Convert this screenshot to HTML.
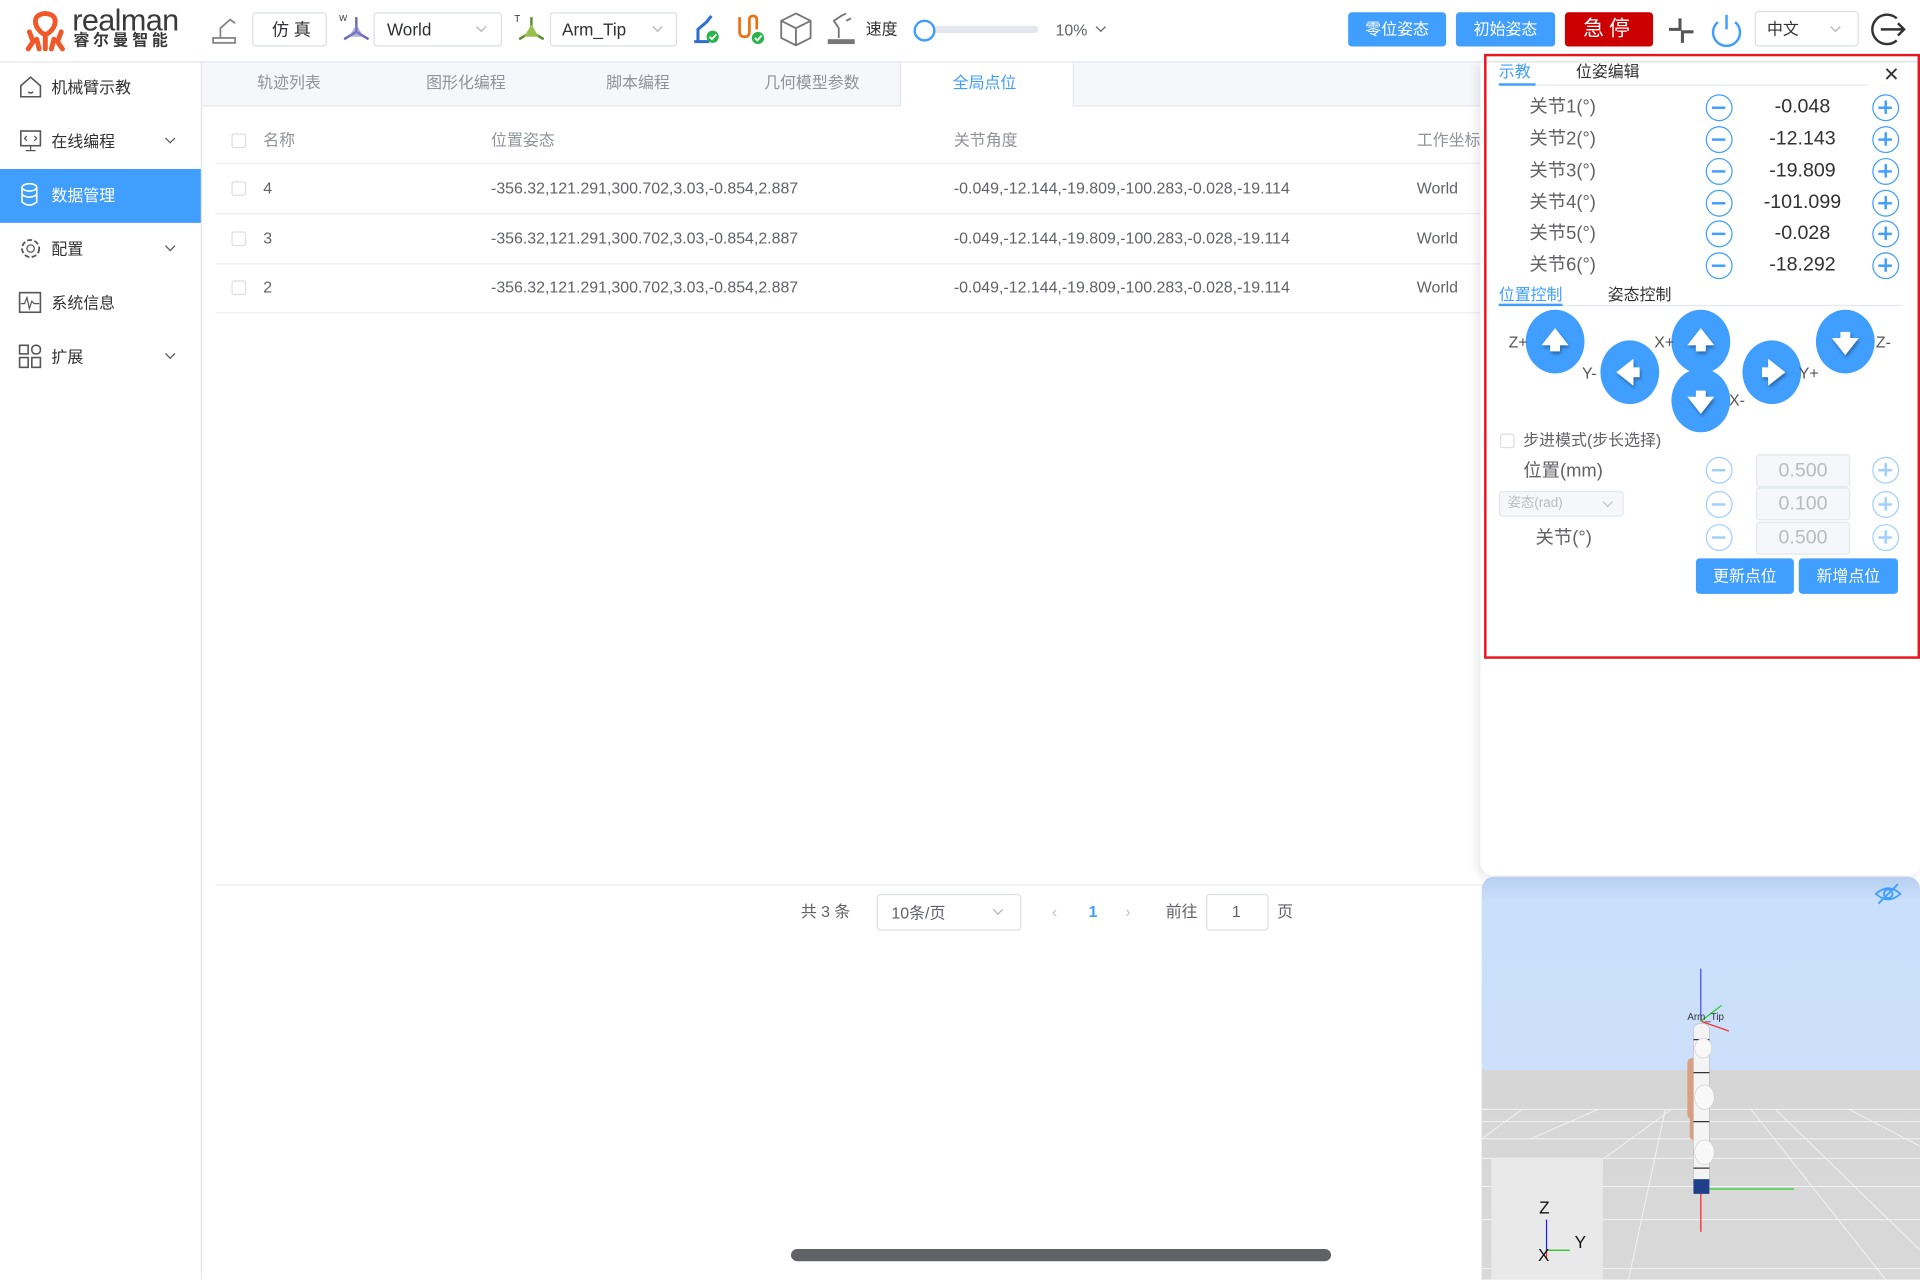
<!DOCTYPE html>
<html><head><meta charset="utf-8"><style>
*{box-sizing:border-box;margin:0;padding:0}
html,body{width:1920px;height:1280px;overflow:hidden;background:#fff}
#w{position:absolute;left:0;top:0;width:1568px;height:1045px;transform:scale(1.22449);transform-origin:0 0;font-family:"Liberation Sans","Noto Sans CJK SC",sans-serif;color:#606266;font-size:13px}
.a{position:absolute}
.t{position:absolute;white-space:nowrap;line-height:1}
.sel{position:absolute;border:1px solid #dcdfe6;border-radius:3px;background:#fff}
.chev{position:absolute;width:6px;height:6px;border-right:1px solid #b0b3b8;border-bottom:1px solid #b0b3b8;transform:rotate(45deg)}
.btn{position:absolute;background:#409eff;color:#fff;border-radius:3px;text-align:center;font-size:13px}
.side .t{font-size:13px;color:#303133}
.row{position:absolute;left:176px;width:1034px;height:1px;background:#ebeef5}
.cb{position:absolute;width:12px;height:12px;border:1px solid #dcdfe6;border-radius:2px;background:#fff}
.circ{position:absolute;width:22px;height:22px;border:1.5px solid #409eff;border-radius:50%}
.circ:before{content:"";position:absolute;left:4px;top:9px;width:11px;height:1.5px;background:#409eff}
.circ.p:after{content:"";position:absolute;left:9px;top:4px;width:1.5px;height:11px;background:#409eff}
.circ.d{border-color:#a0cfff}.circ.d:before,.circ.d:after{background:#a0cfff}
.jl{font-size:15px;color:#606266}
.jv{font-size:16px;color:#303133;text-align:center;width:80px}
.inp{position:absolute;width:77px;height:27px;background:#f5f7fa;border:1px solid #e4e7ed;border-radius:3px;color:#b8bbc0;font-size:16px;text-align:center;line-height:25px}
</style></head><body><div id="w">
<div class="a" style="left:0;top:50px;width:1568px;height:1px;background:#e4e7ed"></div>
<svg class="a" style="left:20px;top:8px" width="34" height="34" viewBox="0 0 34 34"><g fill="none" stroke="#f0582a" stroke-width="4" stroke-linecap="round"><path d="M10 14 Q6 4 17 3 Q28 4 24 14 Q20 20 17 20 Q14 20 10 14Z"/><path d="M4 18 L7 26 L3 32"/><path d="M30 18 L27 26 L31 32"/><path d="M17 22 L17 32"/><path d="M10 24 L12 32"/><path d="M24 24 L22 32"/></g></svg>
<div class="t" style="left:59px;top:5px;font-size:25px;color:#3a3a3a;letter-spacing:-0.5px">realman</div>
<div class="t" style="left:60px;top:26px;font-size:13px;font-weight:bold;color:#3a3a3a;letter-spacing:3px">睿尔曼智能</div>
<svg class="a" style="left:172px;top:11px" width="24" height="26"><g fill="none" stroke="#888" stroke-width="1.5"><rect x="2" y="20" width="18" height="4"/><path d="M8 20 V12 L16 5 L20 8"/></g></svg>
<div class="sel" style="left:206px;top:10px;width:61px;height:28px"></div><div class="t" style="left:222px;top:17px;font-size:14px;color:#303133">仿 真</div>
<svg class="a" style="left:277px;top:10px" width="28" height="26"><text x="0" y="7" font-size="7" fill="#333">W</text><path d="M14 4 V16 L4 22 M14 16 L24 22" stroke="#6a6ab0" stroke-width="2" fill="none"/><path d="M14 10 L8 20 L20 20Z" fill="#8080c8" opacity=".6"/></svg>
<div class="sel" style="left:305px;top:10px;width:105px;height:28px"></div><div class="t" style="left:316px;top:17px;font-size:14px;color:#303133">World</div><div class="chev" style="left:390px;top:19px"></div>
<svg class="a" style="left:420px;top:10px" width="28" height="26"><text x="0" y="8" font-size="8" fill="#333">T</text><path d="M14 4 V16 L4 22 M14 16 L24 22" stroke="#5a8a30" stroke-width="2" fill="none"/><path d="M14 10 L8 20 L20 20Z" fill="#9ac050"/></svg>
<div class="sel" style="left:449px;top:10px;width:104px;height:28px"></div><div class="t" style="left:459px;top:17px;font-size:14px;color:#303133">Arm_Tip</div><div class="chev" style="left:534px;top:19px"></div>
<svg class="a" style="left:563px;top:10px" width="26" height="28"><path d="M4 24 H16 M7 24 V14 L14 8 L18 3" stroke="#2f6fd0" stroke-width="2.5" fill="none"/><circle cx="19" cy="20" r="5" fill="#29b34b"/><path d="M16.5 20 L18.5 22 L22 18" stroke="#fff" stroke-width="1.5" fill="none"/></svg>
<svg class="a" style="left:600px;top:10px" width="26" height="28"><path d="M4 4 V16 Q4 20 8 20 Q12 20 12 16 V6 Q12 3 15 3 Q18 3 18 6 V14" stroke="#f07010" stroke-width="2.2" fill="none"/><circle cx="19" cy="21" r="5" fill="#29b34b"/><path d="M16.5 21 L18.5 23 L22 19" stroke="#fff" stroke-width="1.5" fill="none"/></svg>
<svg class="a" style="left:636px;top:9px" width="28" height="30"><g fill="none" stroke="#777" stroke-width="1.5"><path d="M14 2 L26 8 V22 L14 28 L2 22 V8Z M2 8 L14 14 L26 8 M14 14 V28"/></g></svg>
<svg class="a" style="left:673px;top:9px" width="28" height="30"><g stroke="#777" stroke-width="1.5" fill="none"><path d="M12 22 V14 L8 8 L14 4 M14 4 L18 2 M18 8 L22 6"/></g><rect x="3" y="23" width="22" height="4" fill="#777"/></svg>
<div class="t" style="left:707px;top:17px;font-size:13px;color:#303133">速度</div>
<div class="a" style="left:755px;top:21px;width:93px;height:6px;background:#e4e7ed;border-radius:3px"></div>
<div class="a" style="left:746px;top:16px;width:18px;height:18px;border:2px solid #409eff;border-radius:50%;background:#fff"></div>
<div class="t" style="left:862px;top:18px;font-size:13px;color:#606266">10%</div><div class="chev" style="left:896px;top:19px;border-color:#606266"></div>
<div class="btn" style="left:1101px;top:10px;width:80px;height:28px;line-height:28px">零位姿态</div>
<div class="btn" style="left:1189px;top:10px;width:81px;height:28px;line-height:28px">初始姿态</div>
<div class="btn" style="left:1278px;top:10px;width:72px;height:28px;line-height:28px;background:#cc0000;font-size:17px;letter-spacing:4px">急停</div>
<svg class="a" style="left:1360px;top:12px" width="26" height="26"><path d="M3 12 H12 V3 M14 23 V14 H23" stroke="#555" stroke-width="2.5" fill="none"/></svg>
<svg class="a" style="left:1395px;top:9px" width="30" height="32"><path d="M8 9 A11 11 0 1 0 22 9" stroke="#409eff" stroke-width="2" fill="none"/><path d="M15 3 V15" stroke="#409eff" stroke-width="2"/></svg>
<div class="sel" style="left:1433px;top:9px;width:85px;height:29px"></div><div class="t" style="left:1443px;top:17px;font-size:13px;color:#303133">中文</div><div class="chev" style="left:1496px;top:19px"></div>
<svg class="a" style="left:1527px;top:8px" width="32" height="32"><path d="M22 7 A12 12 0 1 0 22 25" stroke="#333" stroke-width="2" fill="none"/><path d="M9 16 H28 M23 11 L28 16 L23 21" stroke="#333" stroke-width="2" fill="none"/></svg>
<div class="a" style="left:164px;top:51px;width:1px;height:994px;background:#e6e6e6"></div>
<div class="side">
<svg class="a" style="left:15px;top:61px" width="20" height="20"><path d="M2 9 L10 2 L18 9 V18 H2Z M8 14 Q10 16 12 14" stroke="#555" stroke-width="1.3" fill="none"/></svg><div class="t" style="left:42px;top:65px">机械臂示教</div>
<svg class="a" style="left:15px;top:105px" width="20" height="20"><rect x="2" y="2" width="16" height="12" stroke="#555" fill="none" stroke-width="1.3"/><path d="M10 14 V18 M6 18 H14 M7 6 L5 8 L7 10 M13 6 L15 8 L13 10" stroke="#555" fill="none"/></svg><div class="t" style="left:42px;top:109px">在线编程</div><div class="chev" style="left:136px;top:110px;border-color:#555"></div>
<div class="a" style="left:0;top:138px;width:164px;height:44px;background:#409eff"></div>
<svg class="a" style="left:15px;top:149px" width="20" height="22"><g stroke="#fff" stroke-width="1.3" fill="none"><ellipse cx="9" cy="4" rx="6" ry="3"/><path d="M3 4 V16 Q9 21 15 16 V4 M3 10 Q9 14 15 10"/></g></svg><div class="t" style="left:42px;top:153px;color:#fff">数据管理</div>
<svg class="a" style="left:15px;top:193px" width="20" height="20"><circle cx="10" cy="10" r="7" stroke="#555" stroke-width="1.5" fill="none" stroke-dasharray="4 2"/><circle cx="10" cy="10" r="3" stroke="#555" fill="none"/></svg><div class="t" style="left:42px;top:197px">配置</div><div class="chev" style="left:136px;top:198px;border-color:#555"></div>
<svg class="a" style="left:15px;top:237px" width="20" height="20"><rect x="1" y="2" width="17" height="16" stroke="#555" fill="none" stroke-width="1.3"/><path d="M2 11 H5 L7 6 L9 15 L11 9 L13 11 H17" stroke="#555" fill="none"/></svg><div class="t" style="left:42px;top:241px">系统信息</div>
<svg class="a" style="left:15px;top:281px" width="20" height="20"><g stroke="#555" fill="none" stroke-width="1.3"><rect x="1" y="1" width="7" height="7"/><rect x="1" y="11" width="7" height="8"/><rect x="11" y="11" width="7" height="8"/><rect x="11" y="1" width="7" height="7" rx="3"/></g></svg><div class="t" style="left:42px;top:285px">扩展</div><div class="chev" style="left:136px;top:286px;border-color:#555"></div>
</div>
<div class="a" style="left:165px;top:51px;width:1045px;height:36px;background:#f5f7fa;border-bottom:1px solid #e4e7ed"></div>
<div class="a" style="left:735px;top:51px;width:142px;height:36px;background:#fff;border-left:1px solid #e4e7ed;border-right:1px solid #e4e7ed"></div>
<div class="t" style="left:210px;top:61px;color:#909399">轨迹列表</div>
<div class="t" style="left:348px;top:61px;color:#909399">图形化编程</div>
<div class="t" style="left:495px;top:61px;color:#909399">脚本编程</div>
<div class="t" style="left:624px;top:61px;color:#909399">几何模型参数</div>
<div class="t" style="left:778px;top:61px;color:#409eff">全局点位</div>
<div class="cb" style="left:189px;top:109px"></div><div class="t" style="left:215px;top:108px;color:#909399">名称</div>
<div class="t" style="left:401px;top:108px;color:#909399">位置姿态</div><div class="t" style="left:779px;top:108px;color:#909399">关节角度</div><div class="t" style="left:1157px;top:108px;color:#909399">工作坐标</div>
<div class="row" style="top:133px"></div>
<div class="cb" style="left:189px;top:148px"></div><div class="t" style="left:215px;top:147px">4</div><div class="t" style="left:401px;top:147px">-356.32,121.291,300.702,3.03,-0.854,2.887</div><div class="t" style="left:779px;top:147px">-0.049,-12.144,-19.809,-100.283,-0.028,-19.114</div><div class="t" style="left:1157px;top:147px">World</div>
<div class="row" style="top:174px"></div>
<div class="cb" style="left:189px;top:189px"></div><div class="t" style="left:215px;top:188px">3</div><div class="t" style="left:401px;top:188px">-356.32,121.291,300.702,3.03,-0.854,2.887</div><div class="t" style="left:779px;top:188px">-0.049,-12.144,-19.809,-100.283,-0.028,-19.114</div><div class="t" style="left:1157px;top:188px">World</div>
<div class="row" style="top:215px"></div>
<div class="cb" style="left:189px;top:229px"></div><div class="t" style="left:215px;top:228px">2</div><div class="t" style="left:401px;top:228px">-356.32,121.291,300.702,3.03,-0.854,2.887</div><div class="t" style="left:779px;top:228px">-0.049,-12.144,-19.809,-100.283,-0.028,-19.114</div><div class="t" style="left:1157px;top:228px">World</div>
<div class="row" style="top:255px"></div>
<div class="row" style="top:722px"></div>
<div class="t" style="left:654px;top:738px">共 3 条</div>
<div class="sel" style="left:716px;top:730px;width:118px;height:30px"></div><div class="t" style="left:728px;top:739px">10条/页</div><div class="chev" style="left:812px;top:740px"></div>
<div class="t" style="left:859px;top:738px;color:#c0c4cc">‹</div><div class="t" style="left:889px;top:738px;color:#409eff;font-weight:bold">1</div><div class="t" style="left:919px;top:738px;color:#c0c4cc">›</div>
<div class="t" style="left:952px;top:738px">前往</div><div class="sel" style="left:985px;top:730px;width:51px;height:30px"></div><div class="t" style="left:1006px;top:738px">1</div><div class="t" style="left:1043px;top:738px">页</div>
<div class="a" style="left:646px;top:1020px;width:441px;height:10px;background:#606265;border-radius:5px"></div>
<div class="a" style="left:1209px;top:51px;width:359px;height:664px;background:#fff;border-radius:0 0 10px 10px;box-shadow:-2px 2px 8px rgba(0,0,0,.1)"></div>
<div class="a" style="left:1212px;top:44px;width:356px;height:494px;border:2.5px solid #e8141e"></div>
<div class="t" style="left:1224px;top:52px;color:#409eff">示教</div><div class="t" style="left:1287px;top:52px;color:#303133">位姿编辑</div>
<div class="a" style="left:1224px;top:69px;width:302px;height:1px;background:#e4e7ed"></div><div class="a" style="left:1224px;top:68px;width:30px;height:2px;background:#409eff"></div>
<div class="t" style="left:1538px;top:54px;font-size:16px;color:#333">✕</div>
<div class="t jl" style="left:1249px;top:80px">关节1(°)</div><div class="circ" style="left:1393px;top:77px"></div><div class="t jv" style="left:1432px;top:80px">-0.048</div><div class="circ p" style="left:1529px;top:77px"></div>
<div class="t jl" style="left:1249px;top:106px">关节2(°)</div><div class="circ" style="left:1393px;top:103px"></div><div class="t jv" style="left:1432px;top:106px">-12.143</div><div class="circ p" style="left:1529px;top:103px"></div>
<div class="t jl" style="left:1249px;top:132px">关节3(°)</div><div class="circ" style="left:1393px;top:129px"></div><div class="t jv" style="left:1432px;top:132px">-19.809</div><div class="circ p" style="left:1529px;top:129px"></div>
<div class="t jl" style="left:1249px;top:158px">关节4(°)</div><div class="circ" style="left:1393px;top:155px"></div><div class="t jv" style="left:1432px;top:158px">-101.099</div><div class="circ p" style="left:1529px;top:155px"></div>
<div class="t jl" style="left:1249px;top:183px">关节5(°)</div><div class="circ" style="left:1393px;top:180px"></div><div class="t jv" style="left:1432px;top:183px">-0.028</div><div class="circ p" style="left:1529px;top:180px"></div>
<div class="t jl" style="left:1249px;top:209px">关节6(°)</div><div class="circ" style="left:1393px;top:206px"></div><div class="t jv" style="left:1432px;top:209px">-18.292</div><div class="circ p" style="left:1529px;top:206px"></div>
<div class="t" style="left:1224px;top:234px;color:#409eff">位置控制</div><div class="t" style="left:1313px;top:234px;color:#303133">姿态控制</div>
<div class="a" style="left:1224px;top:249px;width:329px;height:1px;background:#e4e7ed"></div><div class="a" style="left:1224px;top:248px;width:52px;height:2px;background:#409eff"></div>
<svg class="a" style="left:1210px;top:250px" width="358" height="105">
<defs><path id="ar" d="M0,-11 L11,3 L4,3 L4,8 L-4,8 L-4,3 L-11,3 Z" fill="#fff"/><filter id="sh"><feDropShadow dx="1" dy="2" stdDeviation="1.2" flood-opacity=".35"/></filter></defs>
<g fill="#409eff"><ellipse cx="60" cy="29" rx="24" ry="26"/><ellipse cx="121" cy="54" rx="24" ry="26"/><ellipse cx="179" cy="29" rx="24" ry="26"/><ellipse cx="179" cy="77" rx="24" ry="26"/><ellipse cx="237" cy="54" rx="24" ry="26"/><ellipse cx="297" cy="29" rx="24" ry="26"/></g>
<g filter="url(#sh)"><use href="#ar" transform="translate(60,29)"/><use href="#ar" transform="translate(121,54) rotate(-90)"/><use href="#ar" transform="translate(179,29)"/><use href="#ar" transform="translate(179,77) rotate(180)"/><use href="#ar" transform="translate(237,54) rotate(90)"/><use href="#ar" transform="translate(297,29) rotate(180)"/></g>
<g font-family="Liberation Sans" font-size="13" fill="#555"><text x="22" y="34">Z+</text><text x="82" y="59">Y-</text><text x="141" y="34">X+</text><text x="202" y="81">X-</text><text x="259" y="59">Y+</text><text x="322" y="34">Z-</text></g>
</svg>
<div class="cb" style="left:1225px;top:354px"></div><div class="t" style="left:1244px;top:353px;color:#606266">步进模式(步长选择)</div>
<div class="t jl" style="left:1244px;top:377px">位置(mm)</div><div class="circ d" style="left:1393px;top:373px"></div><div class="inp" style="left:1434px;top:371px">0.500</div><div class="circ p d" style="left:1529px;top:373px"></div>
<div class="a" style="left:1224px;top:401px;width:102px;height:21px;background:#f5f7fa;border:1px solid #e4e7ed;border-radius:3px"></div><div class="t" style="left:1231px;top:406px;font-size:11px;color:#b8bbc0">姿态(rad)</div><div class="chev" style="left:1310px;top:407px;border-color:#c0c4cc"></div>
<div class="circ d" style="left:1393px;top:401px"></div><div class="inp" style="left:1434px;top:398px">0.100</div><div class="circ p d" style="left:1529px;top:401px"></div>
<div class="t jl" style="left:1254px;top:432px">关节(°)</div><div class="circ d" style="left:1393px;top:428px"></div><div class="inp" style="left:1434px;top:426px">0.500</div><div class="circ p d" style="left:1529px;top:428px"></div>
<div class="btn" style="left:1385px;top:456px;width:80px;height:29px;line-height:29px">更新点位</div>
<div class="btn" style="left:1469px;top:456px;width:81px;height:29px;line-height:29px">新增点位</div>
<div class="a" style="left:1210px;top:716px;width:358px;height:329px;border-radius:10px 10px 0 0;overflow:hidden;background:linear-gradient(#b9cff0,#c9dffb 20px,#cde0fb 158px,#d6d6d6 158px,#d9d9d9)">
<svg width="358" height="329" style="position:absolute;left:0;top:0">
<g stroke="#f2f2f2" stroke-width="0.8" fill="none"><path d="M0 190 H358 M0 200 H358 M0 214 H358 M0 230 H358 M0 253 H358 M0 280 H358 M0 320 H358 M0 214 L33 190 M40 214 L95 190 M100 230 L155 190 M300 190 L358 220 M240 190 L358 305 M220 190 L330 329 M150 190 L120 329"/></g>
<path d="M179 100 V250" stroke="#fff" stroke-width="0.8"/>
<path d="M179 75 V118" stroke="#2020ff" stroke-width="0.8"/><path d="M179 118 L202 126" stroke="#ff2020"/><path d="M179 118 L196 105" stroke="#20d020"/>
<text x="168" y="117" font-size="8" font-family="Liberation Sans" fill="#333">Arm_Tip</text>
<rect x="168" y="148" width="10" height="50" rx="4" fill="#d9a080"/><rect x="170" y="190" width="8" height="25" rx="3" fill="#d9a080"/>
<rect x="173" y="120" width="13" height="135" rx="5" fill="#f4f4f4" stroke="#bbb" stroke-width=".5"/>
<g stroke="#333" stroke-width="1"><path d="M173 133 H186 M173 160 H186 M173 200 H186 M173 238 H186"/></g>
<ellipse cx="181" cy="140" rx="7" ry="8" fill="#f8f8f8" stroke="#ccc" stroke-width=".5"/><ellipse cx="182" cy="180" rx="8" ry="10" fill="#f8f8f8" stroke="#ccc" stroke-width=".5"/><ellipse cx="182" cy="225" rx="8" ry="10" fill="#f8f8f8" stroke="#ccc" stroke-width=".5"/>
<rect x="173" y="247" width="13" height="12" fill="#1f3f8a"/>
<path d="M186 255 H255" stroke="#20d020"/><path d="M179 259 V290" stroke="#ff2020"/>
<rect x="8" y="230" width="91" height="99" fill="#e9e9e9"/>
<path d="M53 280 V305" stroke="#2020ff"/><path d="M53 305 H72" stroke="#20c020"/><path d="M53 305 V312" stroke="#f02020"/>
<g font-family="Liberation Sans" font-size="14" fill="#111"><text x="47" y="275">Z</text><text x="76" y="303">Y</text><text x="46" y="314">X</text></g>
<g transform="translate(332,14)" fill="none" stroke="#409eff" stroke-width="1.5"><path d="M-10 0 Q0 -9 10 0 Q0 9 -10 0Z"/><circle cx="0" cy="0" r="3.5"/><path d="M-8 8 L8 -8"/></g>
</svg></div>
</div></body></html>
